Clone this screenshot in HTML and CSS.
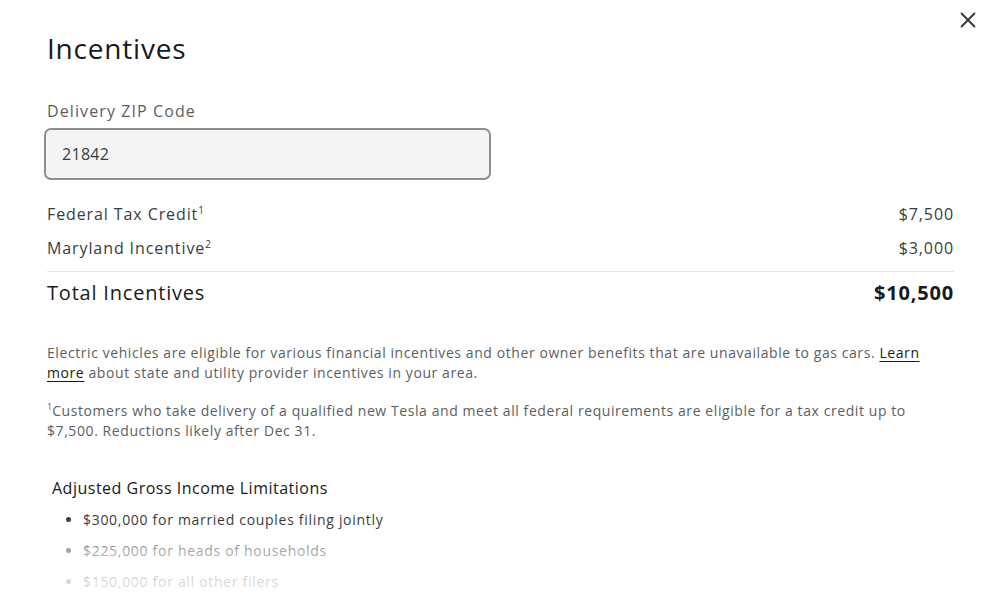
FILE: index.html
```html
<!DOCTYPE html>
<html lang="en">
<head>
    <meta charset="UTF-8">
    <meta name="viewport" content="width=device-width, initial-scale=1.0">
    <title>Incentives</title>
    <link rel="stylesheet" href="styles.css">
</head>
<body>
    <div class="modal">
        <button class="close-btn" title="Close">
            <svg viewBox="0 0 24 24" fill="none" stroke="currentColor" stroke-width="2.2" stroke-linecap="round">
                <path d="M5 5l14 14M19 5L5 19"/>
            </svg>
        </button>
        <h1 class="title">Incentives</h1>

        <label class="zip-label" for="zipInput">Delivery ZIP Code</label>
        <input id="zipInput" class="zip-input" type="text" value="21842">

        <div class="rows">
            <div class="row">
                <span>Federal Tax Credit<sup>1</sup></span>
                <span>$7,500</span>
            </div>
            <div class="row">
                <span>Maryland Incentive<sup>2</sup></span>
                <span>$3,000</span>
            </div>
        </div>
        <div class="row total">
            <span>Total Incentives</span>
            <span class="total-value">$10,500</span>
        </div>

        <p class="note">Electric vehicles are eligible for various financial incentives and other owner benefits that are unavailable to gas cars. <a href="#">Learn more</a> about state and utility provider incentives in your area.</p>
        <p class="note footnote"><sup>1</sup>Customers who take delivery of a qualified new Tesla and meet all federal requirements are eligible for a tax credit up to $7,500. Reductions likely after Dec 31.</p>

        <h3 class="agi-title">Adjusted Gross Income Limitations</h3>
        <ul class="agi-list">
            <li>$300,000 for married couples filing jointly</li>
            <li>$225,000 for heads of households</li>
            <li>$150,000 for all other filers</li>
        </ul>

        <div class="fade"></div>
    </div>
</body>
</html>
```

FILE: styles.css
```css
body {
    margin: 0;
    font-family: "Open Sans", "Noto Sans", sans-serif;
    color: #393c41;
    background: #fff;
}
.modal {
    position: relative;
    height: 600px;
    overflow: hidden;
    padding: 24px 46px 0 47px;
    box-sizing: border-box;
}
.close-btn {
    position: absolute;
    top: 9px;
    right: 21px;
    width: 22px;
    height: 22px;
    padding: 0;
    border: none;
    background: none;
    color: #393c41;
    cursor: pointer;
}
.close-btn svg {
    width: 22px;
    height: 22px;
}
.title {
    margin: 0 0 28px;
    font-size: 28px;
    font-weight: 500;
    letter-spacing: 0.8px;
    color: #171a20;
    line-height: 48px;
}
.zip-label {
    display: block;
    font-size: 16px;
    font-weight: 500;
    letter-spacing: 1.1px;
    color: #5c5e62;
    line-height: 22px;
    margin-bottom: 6px;
}
.zip-input {
    display: block;
    width: 447px;
    height: 52px;
    box-sizing: border-box;
    margin-left: -3px;
    padding: 0 16px;
    border: 2px solid #8e8e8e;
    border-radius: 7px;
    background: #f4f4f4;
    font-family: inherit;
    font-size: 16px;
    font-weight: 500;
    letter-spacing: 0.3px;
    color: #393c41;
}
.rows {
    margin-top: 17px;
    padding-bottom: 6px;
    border-bottom: 1px solid #e2e3e3;
}
.row {
    display: flex;
    justify-content: space-between;
    font-size: 16px;
    letter-spacing: 0.9px;
    line-height: 34px;
}
.row sup {
    font-size: 10px;
    letter-spacing: 0;
    line-height: 0;
}
.total {
    margin-top: 4px;
    font-size: 20px;
    font-weight: 500;
    letter-spacing: 0.8px;
    color: #171a20;
    line-height: 34px;
}
.total-value {
    font-weight: 700;
}
.note {
    margin: 33px 0 0;
    font-size: 14px;
    letter-spacing: 0.58px;
    line-height: 20px;
    color: #5c5e62;
}
.note a {
    color: #171a20;
    text-decoration: underline;
    text-underline-offset: 3px;
}
.footnote {
    margin-top: 18px;
}
.footnote sup {
    font-size: 9px;
    letter-spacing: 0;
    line-height: 0;
}
.agi-title {
    margin: 35px 0 0 5px;
    font-size: 16px;
    font-weight: 500;
    letter-spacing: 0.5px;
    color: #171a20;
    line-height: 24px;
}
.agi-list {
    margin: 4px 0 0;
    padding-left: 36px;
    font-size: 14px;
    letter-spacing: 0.7px;
    line-height: 31px;
    color: #393c41;
}
.fade {
    position: absolute;
    left: 0;
    right: 0;
    bottom: 0;
    height: 72px;
    background: linear-gradient(to bottom, rgba(255, 255, 255, 0), rgba(255, 255, 255, 0.55) 32%, rgba(255, 255, 255, 0.8) 75%, rgba(255, 255, 255, 0.85));
    pointer-events: none;
}
```
